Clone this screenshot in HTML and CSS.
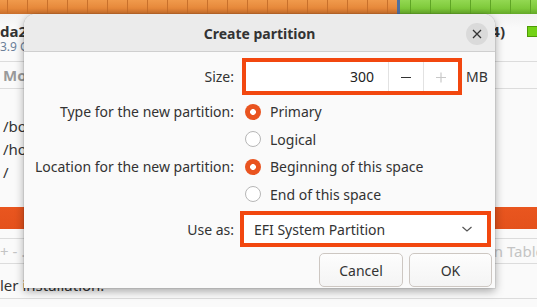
FILE: index.html
```html
<!doctype html>
<html lang="en">
<head>
  <meta charset="utf-8">
  <title>Create partition</title>
  <link rel="stylesheet" href="styles.css">
</head>
<body>
<div class="app">
  <div class="usage">
    <div class="used"></div>
    <div class="split"></div>
    <div class="free"></div>
  </div>
  <div class="head">
    <div class="dev">
      <strong>da2</strong>
      <span class="size">3.9 GB</span>
    </div>
    <div class="legend">
      <strong>(sda4)</strong>
      <span class="swatch"></span>
    </div>
  </div>
  <div class="colhead"><span>Mount Point</span></div>
  <div class="mounts">
    <div>/boot/efi</div>
    <div>/home</div>
    <div>/</div>
  </div>
  <div class="selected"></div>
  <div class="spacer"></div>
  <div class="tools"><span class="dim">+ - ...</span><span class="dim cut">New Partition Table</span></div>
  <div class="boot"><span>ler installation:</span></div>
</div>

<div class="dialog">
  <header class="dlg-head">
    <h1>Create partition</h1>
    <button class="close" aria-label="Close">
      <svg width="10" height="10" viewBox="0 0 10 10"><path d="M1 1L9 9M9 1L1 9" stroke="#333" stroke-width="1.3" fill="none"/></svg>
    </button>
  </header>
  <div class="dlg-body">
    <label class="lbl">Size:</label>
    <div class="ctl">
      <div class="spin hl">
        <span class="value">300</span>
        <span class="step">
          <svg width="12" height="12" viewBox="0 0 12 12"><path d="M1 6.5H11" stroke="#333" stroke-width="1.2"/></svg>
        </span>
        <span class="step">
          <svg width="12" height="12" viewBox="0 0 12 12"><path d="M1 6.5H11M6 1.5V11.5" stroke="#c8c8c8" stroke-width="1.2"/></svg>
        </span>
      </div>
      <span class="unit">MB</span>
    </div>

    <label class="lbl row first">Type for the new partition:</label>
    <div class="ctl row first"><span class="radio on"></span>Primary</div>
    <span class="row"></span>
    <div class="ctl row"><span class="radio"></span>Logical</div>

    <label class="lbl row">Location for the new partition:</label>
    <div class="ctl row"><span class="radio on"></span>Beginning of this space</div>
    <span class="row"></span>
    <div class="ctl row"><span class="radio"></span>End of this space</div>

    <label class="lbl useas">Use as:</label>
    <div class="ctl useas">
      <div class="combo hl">
        <span>EFI System Partition</span>
        <svg width="12" height="8" viewBox="0 0 12 8"><path d="M1.5 2L6 6L10.5 2" stroke="#555" stroke-width="1.2" fill="none"/></svg>
      </div>
    </div>

    <div class="actions">
      <button class="btn">Cancel</button>
      <button class="btn ok">OK</button>
    </div>
  </div>
</div>
</body>
</html>
```

FILE: styles.css
```css
:root{--txt:#333;--line:#dcdcdc;--accent:#e95420;--hl:#f2470f;--font:'Noto Sans','DejaVu Sans',sans-serif;}
*{box-sizing:border-box;margin:0;padding:0;}
body{width:537px;height:307px;overflow:hidden;position:relative;background:#fafafa;font-family:var(--font);font-size:14px;color:var(--txt);}

/* app window behind the dialog */
.app{height:100%;}
.usage{height:14px;display:flex;}
.used{width:397px;background:repeating-linear-gradient(90deg,#c9702b 0 1px,transparent 1px 20px) 7px 0,linear-gradient(#f09a4c,#e6883a 60%,#c96f2c);}
.split{width:3px;background:#4f6f9e;}
.free{flex:1;background:repeating-linear-gradient(90deg,#5fa525 0 1px,transparent 1px 20px) 10px 0,linear-gradient(#93d852,#7ec93a 60%,#64a829);}
.head{height:48px;display:flex;justify-content:space-between;align-items:flex-start;border-bottom:1px solid var(--line);padding-top:9px;background:linear-gradient(#f2f2f2,#fafafa 30%);}
.dev{display:flex;flex-direction:column;}
.dev strong{font-size:15px;line-height:17px;}
.size{font-size:12px;line-height:14px;color:#6b8099;}
.legend{display:flex;align-items:center;gap:22px;}
.legend strong{font-size:15px;line-height:17px;}
.swatch{display:block;flex-shrink:0;width:10px;height:11px;background:#73d216;border:1px solid #4e9a06;border-right:none;}
.colhead{height:27px;display:flex;align-items:center;padding-left:3px;border-bottom:1px solid var(--line);font-weight:700;color:#9a9a9a;font-size:15px;}
.mounts{padding:26px 0 0 3px;line-height:23px;font-size:15px;}
.selected{height:22px;margin-top:23px;background:linear-gradient(#e9561f,#e4511c);}
.spacer{height:10px;border-bottom:1px solid var(--line);}
.tools{height:25px;display:flex;justify-content:space-between;align-items:center;border-bottom:1px solid var(--line);}
.dim{color:#c4c4c4;font-size:15px;}
.cut{margin-right:-7px;}
.boot{height:35px;display:flex;align-items:flex-end;padding-bottom:3px;border-bottom:1px solid var(--line);font-size:15px;}

/* dialog */
.dialog{position:absolute;left:24px;top:14px;width:471px;height:274px;background:#fafafa;border-radius:12px 12px 0 0;box-shadow:0 3px 10px rgba(0,0,0,.35),0 0 0 1px rgba(0,0,0,.06);overflow:hidden;}
.dlg-head{height:38px;background:#ebebeb;border-bottom:1px solid #cfcfcf;display:flex;align-items:center;justify-content:center;position:relative;padding-top:2px;}
.dlg-head h1{font-size:14px;font-weight:700;}
.close{position:absolute;right:7px;top:9px;width:22px;height:22px;border-radius:50%;border:none;background:#dadada;display:flex;align-items:center;justify-content:center;}
.dlg-body{display:grid;grid-template-columns:216px 1fr;padding:6px 3px 0 0;}
.lbl{display:flex;align-items:center;justify-content:flex-end;padding-right:6px;}
.ctl{display:flex;align-items:center;}
.row{height:27.5px;}
.first{margin-top:3px;}
.useas{margin-top:3px;height:36px;}
.hl{border:4px solid var(--hl);background:#fff;}
.spin{margin-left:2px;width:220px;height:37px;display:flex;}
.value{flex:1;text-align:right;padding-right:14px;line-height:29px;font-size:14px;color:#222;}
.step{width:35px;border-left:1px solid #e2e2e2;display:flex;align-items:center;justify-content:center;}
.unit{margin-left:4px;}
.radio{width:16px;height:16px;border-radius:50%;border:1px solid #b6b6b6;background:#fff;margin:0 9px 0 5px;}
.radio.on{border:none;background:radial-gradient(circle,#fff 0 2.6px,var(--accent) 3.2px);}
.combo{width:251px;height:36px;display:flex;align-items:center;justify-content:space-between;padding:0 14px 0 10px;}
.actions{grid-column:1 / 3;display:flex;justify-content:flex-end;gap:6px;margin-top:6px;}
.btn{width:84px;height:34px;border:1px solid #cdc7c2;border-radius:5px;background:linear-gradient(#fdfdfd,#f4f4f4);font-family:var(--font);font-size:14px;color:var(--txt);}
.btn.ok{width:83px;}
```
